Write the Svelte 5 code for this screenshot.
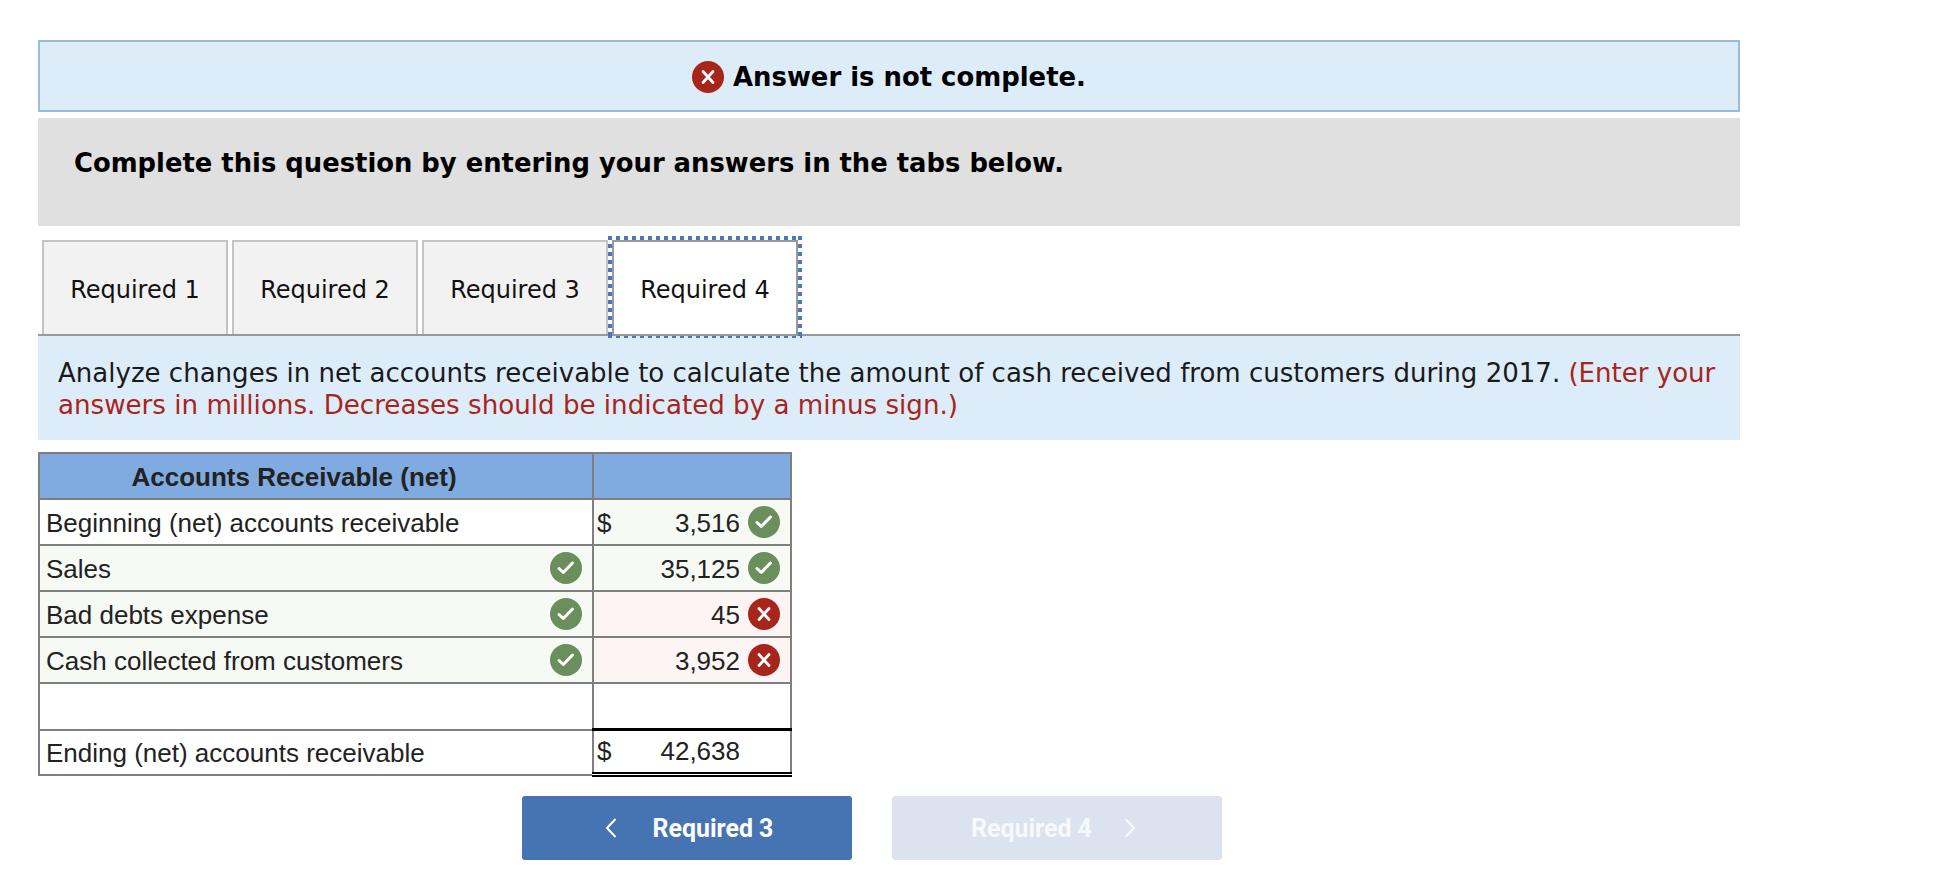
<script>
  const rows = [
    { label: 'Beginning (net) accounts receivable', labelIcon: null, dollar: true, value: '3,516', icon: 'ok' },
    { label: 'Sales', labelIcon: 'ok', dollar: false, value: '35,125', icon: 'ok' },
    { label: 'Bad debts expense', labelIcon: 'ok', dollar: false, value: '45', icon: 'bad' },
    { label: 'Cash collected from customers', labelIcon: 'ok', dollar: false, value: '3,952', icon: 'bad' }
  ];
  const tabs = ['Required 1', 'Required 2', 'Required 3'];
</script>

{#snippet mark(kind)}
  <svg class="mark" viewBox="0 0 32 32" width="32" height="32" aria-hidden="true">
    {#if kind === 'ok'}
      <circle cx="16" cy="16" r="16" fill="#6a8f5c" />
      <path d="M9 16.500l4.300 4 9.200-9.500" fill="none" stroke="#fff" stroke-width="3" stroke-linecap="round" stroke-linejoin="round" />
    {:else}
      <circle cx="16" cy="16" r="16" fill="#a8251c" />
      <path d="M11 10.500l10 11M21 10.500L11 21.500" fill="none" stroke="#fff" stroke-width="2.800" stroke-linecap="round" />
    {/if}
  </svg>
{/snippet}

<main class="page">
  <div class="banner">
    {@render mark('bad')}
    <strong>Answer is not complete.</strong>
  </div>

  <div class="prompt">Complete this question by entering your answers in the tabs below.</div>

  <div class="tabs">
    {#each tabs as tab}
      <div class="tab">{tab}</div>
    {/each}
    <div class="tab active">Required 4</div>
  </div>

  <div class="instructions">
    <div class="line">
      <span>Analyze changes in net accounts receivable to calculate the amount of cash received from customers during 2017.</span>
      <span class="note">(Enter your</span>
    </div>
    <div class="line second note">answers in millions. Decreases should be indicated by a minus sign.)</div>
  </div>

  <table class="sheet">
    <colgroup><col class="c1" /><col class="c2" /></colgroup>
    <thead>
      <tr><th class="title"><span>Accounts Receivable (net)</span></th><th></th></tr>
    </thead>
    <tbody>
      {#each rows as row}
        <tr>
          <td class:tint={row.labelIcon}>
            <div class="cell">
              <span>{row.label}</span>
              {#if row.labelIcon}{@render mark(row.labelIcon)}{/if}
            </div>
          </td>
          <td class={row.icon === 'ok' ? 'tint' : 'wrong'}>
            <div class="cell amount">
              {#if row.dollar}<span class="dollar">$</span>{/if}
              <span class="value">{row.value}</span>
              {@render mark(row.icon)}
            </div>
          </td>
        </tr>
      {/each}
      <tr><td></td><td></td></tr>
      <tr>
        <td class="last"><div class="cell"><span>Ending (net) accounts receivable</span></div></td>
        <td class="last total">
          <div class="cell amount">
            <span class="dollar">$</span>
            <span class="value">42,638</span>
            <span class="slot"></span>
          </div>
        </td>
      </tr>
    </tbody>
  </table>

  <div class="nav">
    <button class="btn">
      <svg viewBox="0 0 14 22" width="14" height="22" aria-hidden="true"><path d="M11.500 2L3 11l8.500 9" fill="none" stroke="currentColor" stroke-width="2" /></svg>
      <span>Required 3</span>
    </button>
    <button class="btn off">
      <span>Required 4</span>
      <svg viewBox="0 0 14 22" width="14" height="22" aria-hidden="true"><path d="M2.500 2L11 11l-8.500 9" fill="none" stroke="currentColor" stroke-width="2" /></svg>
    </button>
  </div>
</main>

<style>
  :global(body) { margin: 0; background: #fff; }
  .page {
    width: 1702px;
    padding: 40px 0 0 38px;
    font-family: "DejaVu Sans", Verdana, sans-serif;
    color: #111;
  }
  .banner {
    box-sizing: border-box;
    height: 72px;
    padding-top: 1px;
    display: flex;
    align-items: center;
    justify-content: center;
    gap: 9px;
    background: #ddecf9;
    border: 2px solid #9abbdc;
    font-size: 25.9px;
  }
  .banner strong { color: #000; }
  .mark { display: block; flex: none; }
  .prompt {
    box-sizing: border-box;
    height: 108px;
    margin-top: 6px;
    padding: 29px 36px 0;
    background: #e0e0e0;
    font-size: 25.84px;
    line-height: 32px;
    font-weight: 700;
    color: #000;
  }
  .tabs {
    display: flex;
    gap: 4px;
    height: 94px;
    margin-top: 14px;
    padding-left: 4px;
    border-bottom: 2px solid #999;
  }
  .tab {
    box-sizing: border-box;
    width: 186px;
    height: 94px;
    padding-top: 3px;
    display: flex;
    align-items: center;
    justify-content: center;
    background: #f2f2f2;
    border: 2px solid #c4c4c4;
    border-bottom: 0;
    font-size: 24px;
    color: #111;
  }
  .tab.active {
    position: relative;
    background: #fff;
    border-color: #999;
    border-bottom: 0;
  }
  .tab.active::after {
    content: "";
    position: absolute;
    inset: -6px -6px -4px -6px;
    background:
      repeating-linear-gradient(90deg, #4a78bc 0 4px, transparent 4px 8px) top / 100% 4px no-repeat,
      repeating-linear-gradient(90deg, #4a78bc 0 4px, transparent 4px 8px) bottom / 100% 2px no-repeat,
      repeating-linear-gradient(180deg, #4a78bc 0 4px, transparent 4px 8px) left / 4px 100% no-repeat,
      repeating-linear-gradient(180deg, #4a78bc 0 4px, transparent 4px 8px) right / 4px 100% no-repeat;
    pointer-events: none;
  }
  .instructions {
    box-sizing: border-box;
    height: 104px;
    padding: 21px 20px 0;
    background: #ddecf9;
    font-size: 26.04px;
    line-height: 32px;
    color: #1a1a1a;
  }
  .line { white-space: nowrap; }
  .second { font-size: 26.14px; }
  .note { color: #a8251c; }
  .sheet {
    width: 752px;
    margin-top: 12px;
    table-layout: fixed;
    border-collapse: collapse;
    font-family: "Liberation Sans", Arial, sans-serif;
    font-size: 26px;
    color: #222;
  }
  .c1 { width: 554px; }
  .c2 { width: 198px; }
  .sheet th, .sheet td {
    height: 44px;
    padding: 0;
    border: 2px solid #7f7f7f;
  }
  .sheet th {
    background: #80abe0;
    font-size: 26px;
    font-weight: 700;
    color: #222;
    text-align: left;
  }
  .title span { display: block; width: 508px; padding-top: 2px; text-align: center; }
  .tint { background: #f6f9f4; }
  .wrong { background: #fdf4f4; }
  .cell {
    display: flex;
    align-items: center;
    justify-content: space-between;
    padding: 0 10px 0 6px;
  }
  .cell span { padding-top: 2px; }
  .amount { padding: 0 10px 0 3px; justify-content: flex-start; }
  .value { margin-left: auto; margin-right: 8px; }
  .slot { width: 32px; flex: none; }
  .dollar { flex: none; }
  .sheet td.last { height: 41px; }
  .sheet td.total {
    border-top: 3px solid #000;
    border-bottom: 5px double #000;
  }
  .total .cell span { padding-top: 0; }
  .nav {
    display: flex;
    gap: 40px;
    margin: 19px 0 0 484px;
  }
  .btn {
    box-sizing: border-box;
    width: 330px;
    height: 64px;
    padding: 0 0 0 3px;
    display: flex;
    align-items: center;
    justify-content: center;
    gap: 35px;
    border: 0;
    border-radius: 3px;
    background: #4674b2;
    color: #fff;
    font-family: Roboto, sans-serif;
    font-size: 24.9px;
    font-weight: 700;
  }
  .btn.off {
    padding: 0 6px 0 0;
    gap: 31px;
    background: #dae3ef;
    color: #f7f9fc;
  }
</style>
